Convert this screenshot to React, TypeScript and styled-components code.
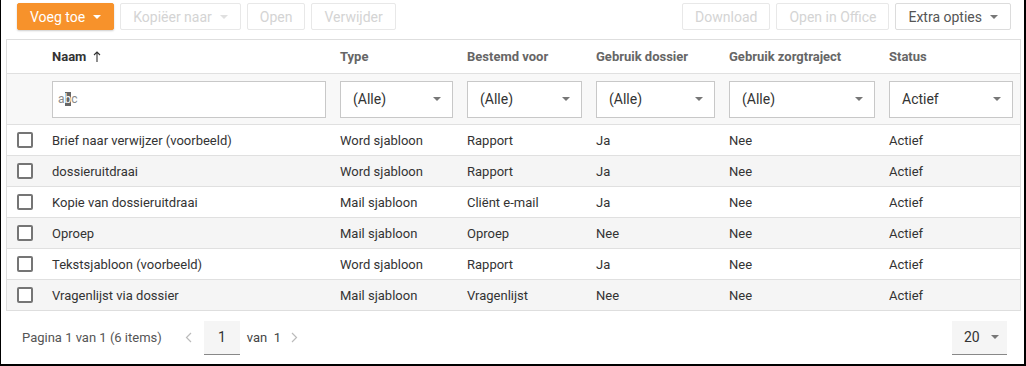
import styled, { createGlobalStyle } from 'styled-components';

const GlobalStyle = createGlobalStyle`
  html, body {
    margin: 0;
    padding: 0;
    background: #fff;
  }
  body {
    font-family: Roboto, "Liberation Sans", sans-serif;
    font-size: 13px;
    color: #333;
  }
`;

const columns = '38px 288px 127px 129px 133px 160px 1fr';

const rows = [
  ['Brief naar verwijzer (voorbeeld)', 'Word sjabloon', 'Rapport', 'Ja', 'Nee', 'Actief'],
  ['dossieruitdraai', 'Word sjabloon', 'Rapport', 'Ja', 'Nee', 'Actief'],
  ['Kopie van dossieruitdraai', 'Mail sjabloon', 'Cliënt e-mail', 'Ja', 'Nee', 'Actief'],
  ['Oproep', 'Mail sjabloon', 'Oproep', 'Nee', 'Nee', 'Actief'],
  ['Tekstsjabloon (voorbeeld)', 'Word sjabloon', 'Rapport', 'Ja', 'Nee', 'Actief'],
  ['Vragenlijst via dossier', 'Mail sjabloon', 'Vragenlijst', 'Nee', 'Nee', 'Actief'],
];

const Caret = ({ color = '#777' }: { color?: string }) => (
  <svg width="8" height="4" viewBox="0 0 8 4">
    <path d="M0 0 L8 0 L4 4 Z" fill={color} />
  </svg>
);

const App = () => {
  return (
    <>
      <GlobalStyle />
      <Frame>
        <Toolbar>
          <Group>
            <Button $variant="primary">
              Voeg toe <Caret color="#fff" />
            </Button>
            <Button $variant="disabled">
              Kopiëer naar <Caret color="#e0e0e0" />
            </Button>
            <Button $variant="disabled">Open</Button>
            <Button $variant="disabled">Verwijder</Button>
          </Group>
          <Group>
            <Button $variant="disabled">Download</Button>
            <Button $variant="disabled">Open in Office</Button>
            <Button>
              Extra opties <Caret />
            </Button>
          </Group>
        </Toolbar>

        <Grid>
          <HeaderRow>
            <Cell />
            <HeadCell $active>
              Naam
              <svg width="8" height="12" viewBox="0 0 8 12" style={{ marginLeft: 7 }}>
                <path d="M4 1 L4 11 M1 4 L4 1 L7 4" stroke="#333" strokeWidth="1.1" fill="none" />
              </svg>
            </HeadCell>
            <HeadCell>Type</HeadCell>
            <HeadCell>Bestemd voor</HeadCell>
            <HeadCell>Gebruik dossier</HeadCell>
            <HeadCell>Gebruik zorgtraject</HeadCell>
            <HeadCell>Status</HeadCell>
          </HeaderRow>

          <FilterRow>
            <Cell />
            <FilterCell>
              <TextBox>
                a<Selected>b</Selected>c
              </TextBox>
            </FilterCell>
            {['(Alle)', '(Alle)', '(Alle)', '(Alle)', 'Actief'].map((v, i) => (
              <FilterCell key={i}>
                <SelectBox>
                  <span>{v}</span>
                  <Caret />
                </SelectBox>
              </FilterCell>
            ))}
          </FilterRow>

          {rows.map((r, i) => (
            <DataRow key={i} $alt={i % 2 === 1}>
              <CheckCell>
                <Check />
              </CheckCell>
              {r.map((c, j) => (
                <Cell key={j}>{c}</Cell>
              ))}
            </DataRow>
          ))}
        </Grid>

        <Pager>
          <PagerInfo>Pagina 1 van 1 (6 items)</PagerInfo>
          <Nav>
            <Chevron width="7" height="11" viewBox="0 0 7 11">
              <path d="M6 1 L1.5 5.5 L6 10" stroke="#bbb" strokeWidth="1.2" fill="none" />
            </Chevron>
            <PageBox $width={36}>1</PageBox>
            <span>van&nbsp; 1</span>
            <Chevron width="7" height="11" viewBox="0 0 7 11">
              <path d="M1 1 L5.5 5.5 L1 10" stroke="#bbb" strokeWidth="1.2" fill="none" />
            </Chevron>
          </Nav>
          <Spacer />
          <PageBox $width={55} $between>
            20 <Caret />
          </PageBox>
        </Pager>
      </Frame>
    </>
  );
};

const Frame = styled.div`
  box-sizing: border-box;
  width: 1026px;
  height: 366px;
  border-left: 1px solid #000;
  border-right: 2px solid #000;
  border-bottom: 2px solid #000;
  display: flex;
  flex-direction: column;
  overflow: hidden;
`;

const Toolbar = styled.div`
  display: flex;
  justify-content: space-between;
  padding: 3px 13px 0 16px;
  height: 36px;
  box-sizing: border-box;
`;

const Group = styled.div`
  display: flex;
  gap: 6px;
`;

const Button = styled.div<{ $variant?: 'primary' | 'disabled' }>`
  box-sizing: border-box;
  height: 27px;
  display: flex;
  align-items: center;
  gap: 8px;
  padding: 0 12px;
  font-size: 14px;
  border-radius: 2px;
  border: 1px solid
    ${(p) => (p.$variant === 'primary' ? '#f7922b' : p.$variant === 'disabled' ? '#e8e8e8' : '#dcdcdc')};
  background: ${(p) => (p.$variant === 'primary' ? '#f7922b' : '#fff')};
  color: ${(p) => (p.$variant === 'primary' ? '#fff' : p.$variant === 'disabled' ? '#d4d4d4' : '#555')};
  box-shadow: ${(p) => (p.$variant === 'primary' ? '0 1px 2px rgba(0,0,0,0.2)' : 'none')};
`;

const Grid = styled.div`
  margin: 3px 3px 0 5px;
  border: 1px solid #dedede;
`;

const RowBase = styled.div`
  display: grid;
  grid-template-columns: ${columns};
  align-items: center;
`;

const HeaderRow = styled(RowBase)`
  height: 33px;
`;

const FilterRow = styled(RowBase)`
  height: 50px;
  background: #f8f8f8;
  border-top: 1px solid #e0e0e0;
`;

const DataRow = styled(RowBase)<{ $alt: boolean }>`
  height: 30px;
  border-top: 1px solid #e0e0e0;
  background: ${(p) => (p.$alt ? '#f5f5f5' : '#fff')};
`;

const Cell = styled.div`
  padding: 0 7px;
  color: #333;
  white-space: nowrap;
`;

const HeadCell = styled(Cell)<{ $active?: boolean }>`
  display: flex;
  align-items: center;
  font-weight: 700;
  font-size: 13px;
  color: ${(p) => (p.$active ? '#333' : '#666')};
`;

const FilterCell = styled.div`
  padding: 0 7px 0 7px;
`;

const TextBox = styled.div`
  box-sizing: border-box;
  height: 37px;
  border: 1px solid #c8c8c8;
  background: #fff;
  display: flex;
  align-items: center;
  padding-left: 5px;
  font-size: 12px;
  color: #888;
`;

const Selected = styled.span`
  background: #666;
  color: #fff;
`;

const SelectBox = styled.div`
  box-sizing: border-box;
  height: 37px;
  border: 1px solid #c8c8c8;
  background: #fff;
  display: flex;
  align-items: center;
  justify-content: space-between;
  padding: 0 11px 0 12px;
  color: #333;
  font-size: 14px;
`;

const CheckCell = styled.div`
  display: flex;
  justify-content: center;
  padding-right: 2px;
`;

const Check = styled.div`
  box-sizing: border-box;
  width: 16px;
  height: 16px;
  border: 2px solid #757575;
  border-radius: 2px;
  background: #fff;
`;

const Pager = styled.div`
  flex: 1;
  display: flex;
  align-items: center;
  padding: 0 17px 0 21px;
`;

const PagerInfo = styled.span`
  color: #555;
`;

const Nav = styled.div`
  display: flex;
  align-items: center;
  margin-left: 23px;
  color: #444;

  & > span {
    margin: 0 10px 0 7px;
  }
`;

const Chevron = styled.svg`
  margin: 0 12px 0 0;
  &:last-child {
    margin: 0;
  }
`;

const PageBox = styled.div<{ $width: number; $between?: boolean }>`
  box-sizing: border-box;
  width: ${(p) => p.$width}px;
  height: 34px;
  background: #f5f5f5;
  border-bottom: 1px solid #888;
  display: flex;
  align-items: center;
  justify-content: ${(p) => (p.$between ? 'space-between' : 'center')};
  padding: ${(p) => (p.$between ? '0 8px 0 12px' : '0')};
  color: #333;
  font-size: 14px;
`;

const Spacer = styled.div`
  flex: 1;
`;

export default App;
